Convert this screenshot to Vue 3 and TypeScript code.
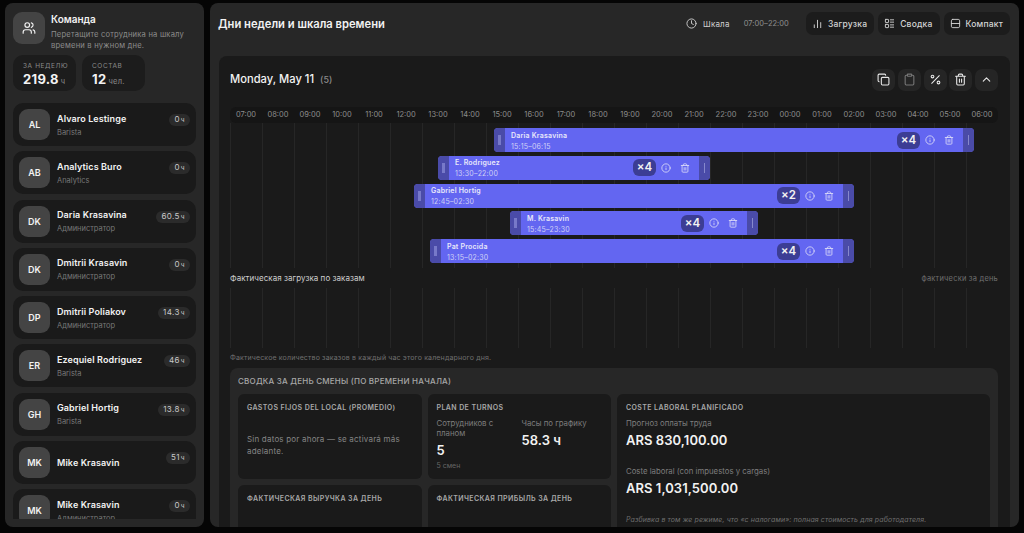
<script setup lang="ts">
interface Employee {
  initials: string;
  name: string;
  role?: string;
  hours: string;
}

interface Shift {
  name: string;
  period: string;
  start: number;
  end: number;
  badge: string;
}

const HOUR_WIDTH = 32;

const employees: Employee[] = [
  { initials: "AL", name: "Alvaro Lestinge", role: "Barista", hours: "0" },
  { initials: "AB", name: "Analytics Buro", role: "Analytics", hours: "0" },
  { initials: "DK", name: "Daria Krasavina", role: "Администратор", hours: "60.5" },
  { initials: "DK", name: "Dmitrii Krasavin", role: "Администратор", hours: "0" },
  { initials: "DP", name: "Dmitrii Poliakov", role: "Администратор", hours: "14.3" },
  { initials: "ER", name: "Ezequiel Rodriguez", role: "Barista", hours: "46" },
  { initials: "GH", name: "Gabriel Hortig", role: "Barista", hours: "13.8" },
  { initials: "MK", name: "Mike Krasavin", hours: "51" },
  { initials: "MK", name: "Mike Krasavin", role: "Администратор", hours: "0" },
];

const hours: string[] = Array.from({ length: 24 }, (_, i) => {
  return `${String((i + 7) % 24).padStart(2, "0")}:00`;
});

// start / end are hours from the left edge of the scale (07:00)
const shifts: Shift[] = [
  { name: "Daria Krasavina", period: "15:15–06:15", start: 8.25, end: 23.25, badge: "×4" },
  { name: "E. Rodriguez", period: "13:30–22:00", start: 6.5, end: 15, badge: "×4" },
  { name: "Gabriel Hortig", period: "12:45–02:30", start: 5.75, end: 19.5, badge: "×2" },
  { name: "M. Krasavin", period: "15:45–23:30", start: 8.75, end: 16.5, badge: "×4" },
  { name: "Pat Procida", period: "13:15–02:30", start: 6.25, end: 19.5, badge: "×4" },
];

function barStyle(shift: Shift) {
  return {
    left: `${shift.start * HOUR_WIDTH}px`,
    width: `${(shift.end - shift.start) * HOUR_WIDTH}px`,
  };
}
</script>

<template>
  <div class="page">
    <aside class="team">
      <div class="team-head">
        <div class="team-icon">
          <svg viewBox="0 0 24 24" width="14" height="14" class="icon">
            <path d="M16 21v-2a4 4 0 0 0-4-4H6a4 4 0 0 0-4 4v2" />
            <circle cx="9" cy="7" r="4" />
            <path d="M22 21v-2a4 4 0 0 0-3-3.87" />
            <path d="M16 3.13a4 4 0 0 1 0 7.75" />
          </svg>
        </div>
        <div class="team-text">
          <div class="team-title">Команда</div>
          <div class="team-desc">Перетащите сотрудника на шкалу времени в нужном дне.</div>
        </div>
      </div>
      <div class="stats">
        <div class="stat">
          <div class="stat-label">ЗА НЕДЕЛЮ</div>
          <div class="stat-value">219.8<small>ч</small></div>
        </div>
        <div class="stat">
          <div class="stat-label">СОСТАВ</div>
          <div class="stat-value">12<small>чел.</small></div>
        </div>
      </div>
      <div class="employee-list">
        <div v-for="(employee, i) in employees" :key="i" class="employee">
          <div class="avatar">{{ employee.initials }}</div>
          <div class="employee-info">
            <div class="employee-name">{{ employee.name }}</div>
            <div v-if="employee.role" class="employee-role">{{ employee.role }}</div>
          </div>
          <div class="employee-hours">{{ employee.hours }}<small>ч</small></div>
        </div>
      </div>
    </aside>

    <main class="main">
      <header class="main-head">
        <h1 class="main-title">Дни недели и шкала времени</h1>
        <div class="scale">
          <svg viewBox="0 0 24 24" width="11" height="11" class="icon">
            <circle cx="12" cy="12" r="10" />
            <path d="M12 6v6l4 2" />
          </svg>
          <span class="scale-label">Шкала</span>
          <span class="scale-range">07:00–22:00</span>
        </div>
        <div class="head-buttons">
          <button class="head-btn">
            <svg viewBox="0 0 24 24" width="11" height="11" class="icon">
              <path d="M5 21v-6M12 21V5M19 21V10" />
            </svg>
            Загрузка
          </button>
          <button class="head-btn">
            <svg viewBox="0 0 24 24" width="11" height="11" class="icon">
              <rect x="3" y="3" width="7" height="7" rx="1" />
              <rect x="3" y="14" width="7" height="7" rx="1" />
              <path d="M14 4h7M14 9h7M14 15h7M14 20h7" />
            </svg>
            Сводка
          </button>
          <button class="head-btn">
            <svg viewBox="0 0 24 24" width="11" height="11" class="icon">
              <rect x="3" y="3" width="18" height="18" rx="3" />
              <path d="M3 12h18" />
            </svg>
            Компакт
          </button>
        </div>
      </header>

      <section class="day">
        <div class="day-head">
          <div class="day-title">Monday, May 11 <span class="day-count">(5)</span></div>
          <div class="day-actions">
            <button class="day-btn">
              <svg viewBox="0 0 24 24" width="13" height="13" class="icon">
                <rect x="8" y="8" width="14" height="14" rx="2" />
                <path d="M4 16c-1.1 0-2-.9-2-2V4c0-1.1.9-2 2-2h10c1.1 0 2 .9 2 2" />
              </svg>
            </button>
            <button class="day-btn dim">
              <svg viewBox="0 0 24 24" width="13" height="13" class="icon">
                <rect x="8" y="2" width="8" height="4" rx="1" />
                <path d="M16 4h2a2 2 0 0 1 2 2v14a2 2 0 0 1-2 2H6a2 2 0 0 1-2-2V6a2 2 0 0 1 2-2h2" />
              </svg>
            </button>
            <button class="day-btn">
              <svg viewBox="0 0 24 24" width="13" height="13" class="icon">
                <path d="M19 5 5 19" />
                <circle cx="6.5" cy="6.5" r="2.5" />
                <circle cx="17.5" cy="17.5" r="2.5" />
              </svg>
            </button>
            <button class="day-btn">
              <svg viewBox="0 0 24 24" width="13" height="13" class="icon">
                <path d="M3 6h18M19 6v14a2 2 0 0 1-2 2H7a2 2 0 0 1-2-2V6M8 6V4a2 2 0 0 1 2-2h4a2 2 0 0 1 2 2v2M10 11v6M14 11v6" />
              </svg>
            </button>
            <button class="day-btn">
              <svg viewBox="0 0 24 24" width="13" height="13" class="icon">
                <path d="m18 15-6-6-6 6" />
              </svg>
            </button>
          </div>
        </div>

        <div class="axis">
          <span v-for="hour in hours" :key="hour" class="axis-hour">{{ hour }}</span>
        </div>

        <div class="timeline grid-lines">
          <div v-for="shift in shifts" :key="shift.name" class="row">
            <div class="bar" :style="barStyle(shift)">
              <div class="handle"><i></i></div>
              <div class="bar-text">
                <div class="bar-name">{{ shift.name }}</div>
                <div class="bar-period">{{ shift.period }}</div>
              </div>
              <div class="bar-badge">{{ shift.badge }}</div>
              <svg viewBox="0 0 24 24" width="10" height="10" class="icon bar-icon">
                <circle cx="12" cy="12" r="10" />
                <path d="M12 16v-4M12 8h.01" />
              </svg>
              <svg viewBox="0 0 24 24" width="10" height="10" class="icon bar-icon">
                <path d="M3 6h18M19 6v14a2 2 0 0 1-2 2H7a2 2 0 0 1-2-2V6M8 6V4a2 2 0 0 1 2-2h4a2 2 0 0 1 2 2v2M10 11v6M14 11v6" />
              </svg>
              <div class="handle end"><i></i></div>
            </div>
          </div>
        </div>

        <div class="load-head">
          <span class="load-title">Фактическая загрузка по заказам</span>
          <span class="load-side">фактически за день</span>
        </div>
        <div class="load-chart grid-lines"></div>
        <p class="load-note">Фактическое количество заказов в каждый час этого календарного дня.</p>

        <div class="summary">
          <h2 class="summary-title">Сводка за день смены (по времени начала)</h2>
          <div class="summary-grid">
            <div class="card">
              <h3 class="card-title">Gastos fijos del local (promedio)</h3>
              <p class="card-empty">Sin datos por ahora — se activará más adelante.</p>
            </div>
            <div class="card">
              <h3 class="card-title">Plan de turnos</h3>
              <div class="plan">
                <div>
                  <div class="metric-label">Сотрудников с планом</div>
                  <div class="metric-value">5</div>
                  <div class="metric-sub">5 смен</div>
                </div>
                <div>
                  <div class="metric-label">Часы по графику</div>
                  <div class="metric-value">58.3 ч</div>
                </div>
              </div>
            </div>
            <div class="card wide">
              <h3 class="card-title">Coste laboral planificado</h3>
              <div class="metric-label">Прогноз оплаты труда</div>
              <div class="metric-value money">ARS 830,100.00</div>
              <div class="metric-label second">Coste laboral (con impuestos y cargas)</div>
              <div class="metric-value money">ARS 1,031,500.00</div>
              <p class="card-note">Разбивка в том же режиме, что «с налогами»: полная стоимость для работодателя.</p>
            </div>
            <div class="card">
              <h3 class="card-title">Фактическая выручка за день</h3>
            </div>
            <div class="card">
              <h3 class="card-title">Фактическая прибыль за день</h3>
            </div>
          </div>
        </div>
      </section>
    </main>
  </div>
</template>

<style>
html,
body {
  margin: 0;
  background: #000;
}
</style>

<style scoped>
.page {
  display: flex;
  gap: 6px;
  box-sizing: border-box;
  height: 533px;
  padding: 3px 5px 6px;
  overflow: hidden;
  background: #050505;
  color: #f2f2f2;
  font-family: Inter, "Liberation Sans", sans-serif;
}

.icon {
  flex: none;
  fill: none;
  stroke: currentColor;
  stroke-width: 2;
  stroke-linecap: round;
  stroke-linejoin: round;
}

/* team sidebar */
.team {
  display: flex;
  flex-direction: column;
  flex: none;
  box-sizing: border-box;
  width: 199px;
  padding: 9px 8px 8px;
  border-radius: 8px;
  background: #272727;
}

.team-head {
  display: flex;
  gap: 6px;
}

.team-icon {
  display: flex;
  align-items: center;
  justify-content: center;
  flex: none;
  width: 32px;
  height: 32px;
  border-radius: 9px;
  background: #444;
}

.team-text {
  padding-top: 1px;
}

.team-title {
  margin-bottom: 4px;
  font-size: 10px;
  font-weight: 600;
  line-height: 12px;
}

.team-desc {
  font-size: 7.6px;
  line-height: 11px;
  letter-spacing: 0.2px;
  color: #8c8c8c;
}

.stats {
  display: flex;
  gap: 6px;
  margin-top: 4px;
}

.stat {
  box-sizing: border-box;
  width: 63px;
  height: 36px;
  padding: 7px 0 0 10px;
  border-radius: 10px;
  background: #1c1c1c;
}

.stat-label {
  font-size: 6.5px;
  line-height: 9px;
  letter-spacing: 0.6px;
  color: #8a8a8a;
}

.stat-value {
  font-size: 13px;
  font-weight: 700;
  line-height: 16px;
  letter-spacing: 0.3px;
}

.stat-value small {
  margin-left: 2px;
  font-size: 7.5px;
  font-weight: 400;
  color: #8a8a8a;
}

.employee-list {
  display: flex;
  flex-direction: column;
  flex: 1;
  gap: 5.3px;
  min-height: 0;
  margin-top: 12px;
  overflow: hidden;
}

.employee {
  display: flex;
  align-items: center;
  flex: none;
  gap: 7px;
  box-sizing: border-box;
  height: 43px;
  padding: 1px 6px 0;
  border-radius: 10px;
  background: #1a1a1a;
}

.avatar {
  display: flex;
  align-items: center;
  justify-content: center;
  flex: none;
  width: 31px;
  height: 31px;
  margin-top: -1px;
  border-radius: 9px;
  background: #444;
  font-size: 9px;
  font-weight: 600;
}

.employee-info {
  flex: 1;
  min-width: 0;
}

.employee-name {
  font-size: 9px;
  font-weight: 600;
  line-height: 12px;
  letter-spacing: 0.1px;
  white-space: nowrap;
}

.employee-role {
  margin-top: 3px;
  font-size: 7.5px;
  line-height: 10px;
  color: #777;
}

.employee-hours {
  align-self: flex-start;
  margin-top: 10px;
  padding: 0 5px;
  border-radius: 6px;
  background: #2b2b2b;
  font-size: 8px;
  line-height: 11px;
  letter-spacing: 0.4px;
  color: #c8c8c8;
}

.employee-hours small {
  margin-left: 1px;
  font-size: 6.5px;
}

/* main column */
.main {
  flex: 1;
  min-width: 0;
  border-radius: 8px;
  background: #272727;
  overflow: hidden;
}

.main-head {
  display: flex;
  align-items: center;
  height: 41px;
  padding: 0 9px 0 8px;
}

.main-title {
  flex: 1;
  margin: 0;
  font-size: 11.2px;
  font-weight: 600;
}

.scale {
  display: flex;
  align-items: center;
  gap: 6px;
  margin-right: 17px;
  color: #d0d0d0;
}

.scale-label {
  font-size: 8px;
  letter-spacing: 0.2px;
}

.scale-range {
  margin-left: 8px;
  font-size: 7.5px;
  letter-spacing: 0.05px;
  color: #8f8f8f;
}

.head-buttons {
  display: flex;
  gap: 4px;
}

.head-btn {
  display: flex;
  align-items: center;
  gap: 5px;
  height: 23px;
  padding: 0 7px 0 6px;
  border: 0;
  border-radius: 7px;
  background: #1c1c1c;
  color: #d4d4d4;
  font: 500 8.5px Inter, "Liberation Sans", sans-serif;
  letter-spacing: 0.2px;
}

/* day panel */
.day {
  margin: 12px 9px 0;
  padding: 0 12px 0 11px;
  border-radius: 8px;
  background: #1a1a1a;
}

.day-head {
  display: flex;
  align-items: center;
  justify-content: space-between;
  padding: 12px 0 16px;
}

.day-title {
  font-size: 11.2px;
  font-weight: 500;
  line-height: 22px;
}

.day-count {
  margin-left: 3px;
  font-size: 9px;
  color: #8a8a8a;
}

.day-actions {
  display: flex;
  gap: 2.7px;
}

.day-btn {
  display: flex;
  align-items: center;
  justify-content: center;
  width: 23px;
  height: 22px;
  padding: 0;
  border: 0;
  border-radius: 7px;
  background: #252525;
  color: #e8e8e8;
}

.day-btn.dim {
  color: #777;
}

.axis {
  display: grid;
  grid-template-columns: repeat(24, 32px);
  height: 16px;
  border-radius: 6px;
  background: #151515;
}

.axis-hour {
  font-size: 7.5px;
  line-height: 16px;
  text-align: center;
  color: #8c8c8c;
}

.grid-lines {
  background-image: repeating-linear-gradient(
    90deg,
    #262626 0,
    #262626 1px,
    transparent 1px,
    transparent 32px
  );
}

.timeline {
  display: flex;
  flex-direction: column;
  gap: 3.75px;
  height: 145px;
  padding-top: 5px;
  box-sizing: border-box;
}

.row {
  position: relative;
  height: 24px;
}

.bar {
  position: absolute;
  top: 0;
  bottom: 0;
  display: flex;
  align-items: center;
  border-radius: 4px;
  background: #6366f1;
  overflow: hidden;
}

.handle {
  display: flex;
  align-items: center;
  justify-content: center;
  flex: none;
  align-self: stretch;
  width: 11px;
  background: #4a4ba8;
}

.handle i {
  width: 2.5px;
  height: 10px;
  background: #7779c9;
}

.handle.end i {
  width: 1.5px;
  background: #8688cc;
}

.bar-text {
  flex: 1;
  min-width: 0;
  padding: 1px 0 0 6px;
}

.bar-name {
  font-size: 7px;
  font-weight: 600;
  line-height: 11px;
  letter-spacing: 0.2px;
  color: #e8e8fa;
}

.bar-period {
  font-size: 7px;
  line-height: 11px;
  letter-spacing: 0.2px;
  color: #d0d1f6;
}

.bar-badge {
  flex: none;
  width: 23px;
  height: 17px;
  border-radius: 6px;
  background: #3c3d94;
  font-size: 11.5px;
  font-weight: 600;
  line-height: 17px;
  text-align: center;
}

.bar-icon {
  margin-left: 5px;
  margin-right: 4px;
  color: #dcdcf8;
}

.bar-icon:last-of-type {
  margin-right: 9px;
}

.load-head {
  display: flex;
  align-items: center;
  justify-content: space-between;
  height: 16px;
  margin-top: 2px;
}

.load-title {
  font-size: 8px;
  letter-spacing: 0.05px;
  color: #cfcfcf;
}

.load-side {
  font-size: 7.5px;
  letter-spacing: 0.2px;
  color: #6f6f6f;
}

.load-chart {
  height: 60px;
  margin-top: 2px;
}

.load-note {
  margin: 5px 0 6px;
  font-size: 7px;
  line-height: 9px;
  letter-spacing: 0.15px;
  color: #6f6f6f;
}

.summary {
  padding: 8px 8px 12px;
  border-radius: 8px;
  background: #272727;
}

.summary-title {
  margin: 0 0 7px;
  font-size: 8px;
  font-weight: 500;
  line-height: 11px;
  letter-spacing: 0.22px;
  text-transform: uppercase;
  color: #a8a8a8;
}

.summary-grid {
  display: grid;
  grid-template-columns: 183.5px 183.5px 1fr;
  grid-auto-rows: 85px;
  gap: 6px;
}

.card {
  box-sizing: border-box;
  padding: 9px 9px;
  border-radius: 6px;
  background: #1a1a1a;
}

.card.wide {
  grid-column: 3;
  grid-row: 1 / span 2;
}

.card-title {
  margin: 0;
  font-size: 7px;
  font-weight: 600;
  line-height: 9px;
  letter-spacing: 0.4px;
  text-transform: uppercase;
  color: #a8a8a8;
}

.card-empty {
  margin: 21px 0 0;
  font-size: 8px;
  line-height: 12px;
  letter-spacing: 0.2px;
  color: #858585;
}

.plan {
  display: grid;
  grid-template-columns: 85px 1fr;
  margin-top: 6px;
}

.metric-label {
  margin-top: 6px;
  font-size: 7.8px;
  line-height: 10px;
  color: #7d7d7d;
}

.metric-label.second {
  margin-top: 18px;
}

.metric-value {
  margin-top: 4px;
  font-size: 13px;
  font-weight: 600;
  line-height: 16px;
  letter-spacing: 0.05px;
}

.metric-sub {
  margin-top: 3px;
  font-size: 7px;
  line-height: 10px;
  color: #666;
}

.plan .metric-label {
  margin-top: 0;
}

.card-note {
  margin: 19px 0 0;
  font-size: 7px;
  font-style: italic;
  line-height: 10px;
  letter-spacing: 0.1px;
  color: #6f6f6f;
}
</style>
